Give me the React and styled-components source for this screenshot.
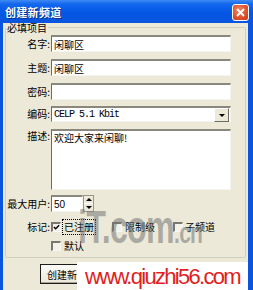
import React from "react";
import styled, { createGlobalStyle } from "styled-components";

const GlobalStyle = createGlobalStyle`
  html, body {
    margin: 0;
    padding: 0;
    background: #0a50d8;
  }
  body {
    font-family: "Noto Sans CJK SC", "Liberation Sans", sans-serif;
  }
`;

const Window = styled.div`
  position: relative;
  width: 253px;
  height: 290px;
  display: flex;
  flex-direction: column;
  overflow: hidden;
  background: #0a50d8;
`;

const TitleBar = styled.div`
  height: 23px;
  flex: none;
  display: flex;
  align-items: center;
  justify-content: space-between;
  padding: 0 4px 0 5px;
  box-sizing: border-box;
  background: linear-gradient(#3e8af5 0%, #1367ee 18%, #0456e4 55%, #0a55de 100%);
  color: #fff;
  font-size: 11px;
  font-weight: 700;
  text-shadow: 1px 1px 0 #0b2f8a;
  letter-spacing: 0.3px;
`;

const CloseButton = styled.div`
  width: 17px;
  height: 17px;
  box-sizing: border-box;
  border: 1px solid #fff;
  border-radius: 3px;
  background: radial-gradient(circle at 40% 35%, #f08a66 0%, #e0532d 55%, #c8381a 100%);
  display: flex;
  align-items: center;
  justify-content: center;
  margin-top: 1px;
`;

const Body = styled.div`
  flex: 1;
  background: #ece9d8;
  border-left: 3px solid #0a55de;
  border-right: 5px solid #0a55de;
  display: flex;
  flex-direction: column;
  font-size: 10px;
  color: #000;
`;

const Group = styled.fieldset`
  margin: -1px 0 0 2px;
  width: 241px;
  box-sizing: border-box;
  border: 1px solid #d0d0bf;
  border-radius: 2px;
  padding: 2px 0 0 0;
  height: 236px;
  display: grid;
  grid-template-columns: 44px 180px;
  column-gap: 1px;
  align-content: start;
`;

const Legend = styled.legend`
  padding: 0 1px;
  margin-left: 0;
  line-height: 11px;
  font-size: 10px;
`;

const Label = styled.div`
  text-align: right;
  line-height: ${(p) => p.$h || 17}px;
  margin-top: ${(p) => p.$mt || 0}px;
  white-space: nowrap;
  align-self: start;
`;

const Field = styled.div`
  height: ${(p) => p.$h || 17}px;
  margin-top: ${(p) => p.$mt || 0}px;
  box-sizing: border-box;
  background: #fff;
  border-top: 2px solid #8a887c;
  border-left: 1px solid #6e6c62;
  border-right: 1px solid #f4f3ee;
  border-bottom: 1px solid #f4f3ee;
  padding: 1px 0 0 2px;
  line-height: 12px;
  display: flex;
  align-items: ${(p) => (p.$top ? "flex-start" : "center")};
  white-space: nowrap;
`;

const Mono = styled.span`
  font-family: "Liberation Mono", monospace;
  font-size: 10px;
  letter-spacing: -1px;
  flex: 1;
`;

const DropButton = styled.div`
  width: 13px;
  height: 12px;
  margin-right: 1px;
  background: #ece9d8;
  border: 1px solid #fff;
  border-right-color: #6e6c62;
  border-bottom-color: #6e6c62;
  display: flex;
  align-items: center;
  justify-content: center;
`;

const Triangle = styled.div`
  width: 0;
  height: 0;
  border-left: 3px solid transparent;
  border-right: 3px solid transparent;
  border-${(p) => (p.$up ? "bottom" : "top")}: 3px solid #000;
`;

const SpinRow = styled.div`
  display: flex;
  margin-top: 5px;
`;

const SpinInput = styled(Field)`
  width: 32px;
  margin-top: 0;
  font-family: "Liberation Sans", sans-serif;
  font-size: 10px;
`;

const SpinButtons = styled.div`
  width: 11px;
  height: 17px;
  display: flex;
  flex-direction: column;
  border: 1px solid #9a988c;
  box-sizing: border-box;
  background: #ece9d8;
`;

const SpinHalf = styled.div`
  flex: 1;
  display: flex;
  align-items: center;
  justify-content: center;
  border-bottom: ${(p) => (p.$first ? "1px solid #fff" : "none")};
`;

const CheckRow = styled.div`
  grid-column: 2;
  display: flex;
  align-items: center;
  height: ${(p) => p.$h || 17}px;
  margin-top: ${(p) => p.$mt || 0}px;
`;

const CheckItem = styled.div`
  display: flex;
  align-items: center;
  width: ${(p) => p.$w || "auto"};
`;

const Box = styled.div`
  width: 10px;
  height: 10px;
  flex: none;
  box-sizing: border-box;
  border-top: 2px solid #7a786e;
  border-left: 2px solid #7a786e;
  border-right: 1px solid #f8f7f2;
  border-bottom: 1px solid #f8f7f2;
  background: #f2f1ea;
  display: flex;
  align-items: center;
  justify-content: center;
  margin-right: ${(p) => p.$gap ?? 2}px;
`;

const CheckText = styled.span`
  padding: 1px 1px;
  line-height: 12px;
  outline: ${(p) => (p.$focus ? "1px dotted #000" : "none")};
`;

const Footer = styled.div`
  flex: 1;
  display: flex;
  align-items: flex-start;
  padding: 6px 0 0 37px;
`;

const Button = styled.div`
  width: 72px;
  height: 20px;
  box-sizing: border-box;
  border: 1px solid #1c1c1c;
  background: linear-gradient(#fbfaf5, #ece9d8);
  box-shadow: inset -1px -1px 0 #a8a698;
  display: flex;
  align-items: center;
  padding-left: 6px;
  font-size: 10px;
`;

const Watermark = styled.div`
  position: absolute;
  left: 78px;
  top: 204px;
  font-family: "Liberation Sans", sans-serif;
  font-weight: 700;
  color: rgba(115, 115, 115, 0.55);
  white-space: nowrap;
  pointer-events: none;
  line-height: 1;
  display: flex;
  align-items: baseline;
  transform: scaleX(0.7);
  transform-origin: left top;
`;

const WmBig = styled.span`
  font-size: 46px;
  letter-spacing: -1px;
`;

const WmSmall = styled.span`
  font-size: 30px;
  letter-spacing: -1px;
`;

const Stamp = styled.div`
  position: absolute;
  left: 77px;
  top: 262px;
  width: 171px;
  height: 28px;
  background: #fff;
  color: #e01e1e;
  font-family: "Liberation Sans", sans-serif;
  font-size: 22px;
  letter-spacing: -1.7px;
  display: flex;
  align-items: center;
  padding-left: 8px;
  box-sizing: border-box;
  padding-top: 2px;
`;

function Check() {
  return (
    <svg width="8" height="7" viewBox="0 0 8 7">
      <path d="M1 3 L3 5 L7 1" stroke="#000" strokeWidth="1.6" fill="none" />
    </svg>
  );
}

export default function App() {
  return (
    <>
      <GlobalStyle />
      <Window>
        <TitleBar>
          <span>创建新频道</span>
          <CloseButton>
            <svg width="9" height="9" viewBox="0 0 9 9">
              <path d="M1 1 L8 8 M8 1 L1 8" stroke="#fff" strokeWidth="1.8" />
            </svg>
          </CloseButton>
        </TitleBar>
        <Body>
          <Group>
            <Legend>必填项目</Legend>
            <Label>名字:</Label>
            <Field>闲聊区</Field>
            <Label $mt={7}>主题:</Label>
            <Field $mt={7}>闲聊区</Field>
            <Label $mt={7}>密码:</Label>
            <Field $mt={7}></Field>
            <Label $mt={6} $h={16}>编码:</Label>
            <Field $mt={6} $h={16}>
              <Mono>CELP 5.1 Kbit</Mono>
              <DropButton>
                <Triangle />
              </DropButton>
            </Field>
            <Label $mt={7} $h={13}>描述:</Label>
            <Field $mt={7} $h={61} $top>
              欢迎大家来闲聊!
            </Field>
            <Label $mt={5}>最大用户:</Label>
            <SpinRow>
              <SpinInput>50</SpinInput>
              <SpinButtons>
                <SpinHalf $first>
                  <Triangle $up />
                </SpinHalf>
                <SpinHalf>
                  <Triangle />
                </SpinHalf>
              </SpinButtons>
            </SpinRow>
            <Label $mt={6}>标记:</Label>
            <CheckRow $mt={6}>
              <CheckItem $w="61px">
                <Box>
                  <Check />
                </Box>
                <CheckText $focus>已注册</CheckText>
              </CheckItem>
              <CheckItem $w="61px">
                <Box $gap={2} />
                <CheckText>限制级</CheckText>
              </CheckItem>
              <CheckItem>
                <Box $gap={1} />
                <CheckText>子频道</CheckText>
              </CheckItem>
            </CheckRow>
            <CheckRow $mt={3} $h={16}>
              <Box />
              <CheckText>默认</CheckText>
            </CheckRow>
          </Group>
          <Footer>
            <Button>创建新频道</Button>
          </Footer>
        </Body>
        <Watermark>
          <WmBig>iT.com</WmBig>
          <WmSmall>.cn</WmSmall>
        </Watermark>
        <Stamp>www.qiuzhi56.com</Stamp>
      </Window>
    </>
  );
}
